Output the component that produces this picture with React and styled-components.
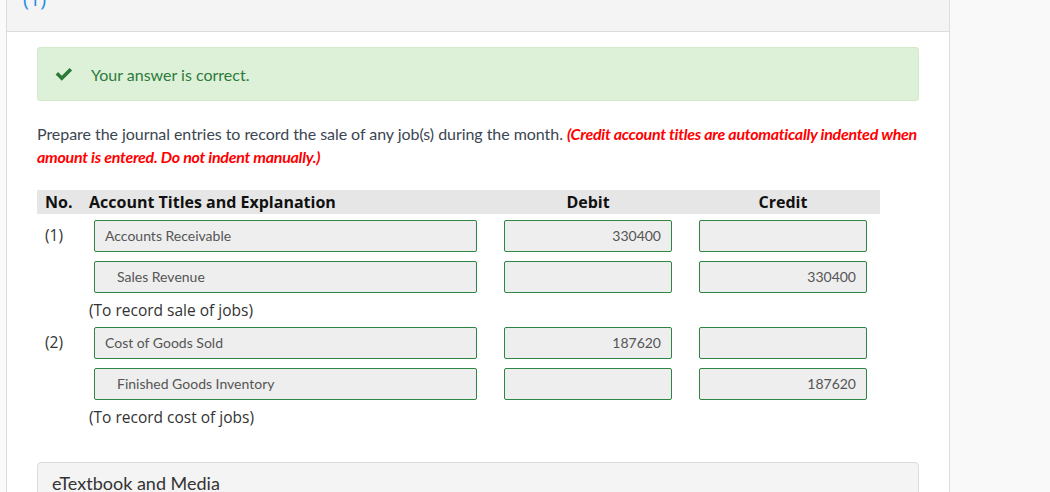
import React from "react";
import styled, { createGlobalStyle } from "styled-components";

const Global = createGlobalStyle`
  html, body { margin: 0; padding: 0; background: #fafafa; }
  body { font-family: Lato, "Open Sans", sans-serif; color: #333; }
`;

const Page = styled.div`
  width: 1050px;
  height: 492px;
  overflow: hidden;
  display: flex;
`;

const Panel = styled.div`
  margin-left: 6px;
  width: 942px;
  flex-shrink: 0;
  border-left: 1px solid #dcdcdc;
  border-right: 1px solid #dcdcdc;
  background: #fff;
  display: flex;
  flex-direction: column;
`;

const PanelHead = styled.div`
  flex-shrink: 0;
  height: 31px;
  background: #f4f4f4;
  border-bottom: 1px solid #dcdcdc;
  overflow: hidden;
  padding-left: 16px;
`;

const PartLabel = styled.div`
  font-family: "Open Sans", sans-serif;
  font-size: 20px;
  line-height: 20px;
  color: #1a8fe0;
  margin-top: -11px;
`;

const Body = styled.div`
  flex-shrink: 0;
  padding: 15px 30px 0 30px;
  display: flex;
  flex-direction: column;
`;

const Alert = styled.div`
  flex-shrink: 0;
  height: 52px;
  background: #dcf1d7;
  border: 1px solid #d2eac9;
  border-radius: 3px;
  display: flex;
  align-items: center;
  padding-left: 17px;
  gap: 18px;
  color: #2e7a3c;
  font-size: 16px;
`;

const Prompt = styled.p`
  margin: 21px 0 0 0;
  font-size: 16px;
  line-height: 23px;
  color: #3b4652;
  letter-spacing: -0.05px;
`;

const Hint = styled.span`
  color: #ff0000;
  font-weight: 700;
  font-style: italic;
  letter-spacing: -0.27px;
`;

const Grid = styled.div`
  margin-top: 22px;
  display: grid;
  grid-template-columns: 52px 401px 196px 194px;
  width: 843px;
`;

const HeadCell = styled.div`
  background: #e6e6e6;
  height: 24px;
  line-height: 24px;
  font-family: "Open Sans", sans-serif;
  font-weight: 700;
  font-size: 16px;
  color: #111;
  padding-left: ${(p) => (p.$first ? "8px" : "0")};
  text-align: ${(p) => (p.$center ? "center" : "left")};
  white-space: nowrap;
`;

const NumCell = styled.div`
  font-family: "Open Sans", sans-serif;
  font-size: 15.5px;
  color: #333;
  padding-left: 8px;
  height: ${(p) => p.$h || 32}px;
  line-height: 30px;
  margin-top: ${(p) => p.$top}px;
`;

const Cell = styled.div`
  margin-top: ${(p) => p.$top}px;
  padding-left: ${(p) => p.$pad}px;
`;

const Field = styled.div`
  box-sizing: border-box;
  width: ${(p) => p.$w}px;
  height: 32px;
  background: #eeeeee;
  border: 1px solid #2c8540;
  border-radius: 2px;
  font-family: Lato, sans-serif;
  font-size: 14px;
  color: #555;
  line-height: 30px;
  padding: 0 10px 0 ${(p) => (p.$indent ? 22 : 10)}px;
  text-align: ${(p) => (p.$num ? "right" : "left")};
  white-space: nowrap;
`;

const Explain = styled.div`
  grid-column: 2 / 5;
  font-family: "Open Sans", sans-serif;
  font-size: 15.5px;
  color: #333;
  height: 24px;
  line-height: 24px;
  margin-top: 5px;
`;

const Media = styled.div`
  flex-shrink: 0;
  margin-top: 33px;
  height: 40px;
  background: #f4f4f4;
  border: 1px solid #dcdcdc;
  border-radius: 4px;
  padding: 9px 0 0 14px;
  font-size: 18px;
  color: #333;
`;

const Side = styled.div`
  flex: 1;
  background: #f9f9f9;
`;

const Check = () => (
  <svg width="18" height="14" viewBox="0 0 18 14" aria-hidden="true">
    <path d="M0.6 7.6 L3.1 5.1 L6.8 8.8 L14.6 1 L17.1 3.5 L6.8 13.8 Z" fill="#2b7a3b" />
  </svg>
);

const entries = [
  {
    no: "(1)",
    lines: [
      { acct: "Accounts Receivable", debit: "330400", credit: "" },
      { acct: "Sales Revenue", debit: "", credit: "330400", indent: true },
    ],
    note: "(To record sale of jobs)",
  },
  {
    no: "(2)",
    lines: [
      { acct: "Cost of Goods Sold", debit: "187620", credit: "" },
      { acct: "Finished Goods Inventory", debit: "", credit: "187620", indent: true },
    ],
    note: "(To record cost of jobs)",
  },
];

export default function App() {
  return (
    <Page>
      <Global />
      <Panel>
        <PanelHead>
          <PartLabel>(1)</PartLabel>
        </PanelHead>
        <Body>
          <Alert>
            <Check />
            <span>Your answer is correct.</span>
          </Alert>
          <Prompt>
            Prepare the journal entries to record the sale of any job(s) during the month.{" "}
            <Hint>
              (Credit account titles are automatically indented when amount is entered. Do not indent manually.)
            </Hint>
          </Prompt>
          <Grid>
            <HeadCell $first>No.</HeadCell>
            <HeadCell>Account Titles and Explanation</HeadCell>
            <HeadCell $center>Debit</HeadCell>
            <HeadCell $center>Credit</HeadCell>
            {entries.map((e, ei) => (
              <React.Fragment key={ei}>
                {e.lines.map((l, li) => {
                  const top = li === 0 ? (ei === 0 ? 6 : 5) : 9;
                  return (
                    <React.Fragment key={li}>
                      <NumCell $top={top}>{li === 0 ? e.no : ""}</NumCell>
                      <Cell $top={top} $pad={5}>
                        <Field $w={383} $indent={l.indent}>{l.acct}</Field>
                      </Cell>
                      <Cell $top={top} $pad={14}>
                        <Field $w={168} $num>{l.debit}</Field>
                      </Cell>
                      <Cell $top={top} $pad={13}>
                        <Field $w={168} $num>{l.credit}</Field>
                      </Cell>
                    </React.Fragment>
                  );
                })}
                <NumCell $top={5} $h={24} />
                <Explain>{e.note}</Explain>
              </React.Fragment>
            ))}
          </Grid>
          <Media>eTextbook and Media</Media>
        </Body>
      </Panel>
      <Side />
    </Page>
  );
}
